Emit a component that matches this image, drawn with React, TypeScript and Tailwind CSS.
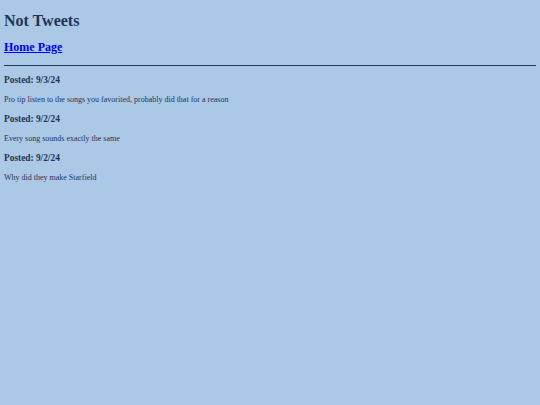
import React from 'react';

const posts = [
  { date: '9/3/24', text: 'Pro tip listen to the songs you favorited, probably did that for a reason' },
  { date: '9/2/24', text: 'Every song sounds exactly the same' },
  { date: '9/2/24', text: 'Why did they make Starfield' },
];

export default function App() {
  return (
    <div className="min-h-screen bg-[#abc8e6] px-[4px] pt-[11.7px] font-['Liberation_Serif',serif] text-[#1e3656]">
      <div className="flex flex-col">
        <h1 className="text-[16px] font-bold leading-[18.4px]">Not Tweets</h1>
        <h2 className="mt-[10.7px] text-[12px] font-bold leading-[13.8px]">
          <a href="#" className="text-[#0000ee] underline">Home Page</a>
        </h2>
        <hr className="mt-[10px] border-t border-[#1e3656]" />
        {posts.map((post, i) => (
          <div key={i} className="flex flex-col">
            <h3 className="mt-[9.4px] text-[9.36px] font-bold leading-[10.8px]">Posted: {post.date}</h3>
            <p className="mt-[9.4px] text-[8px] leading-[9.2px]">{post.text}</p>
          </div>
        ))}
      </div>
    </div>
  );
}
